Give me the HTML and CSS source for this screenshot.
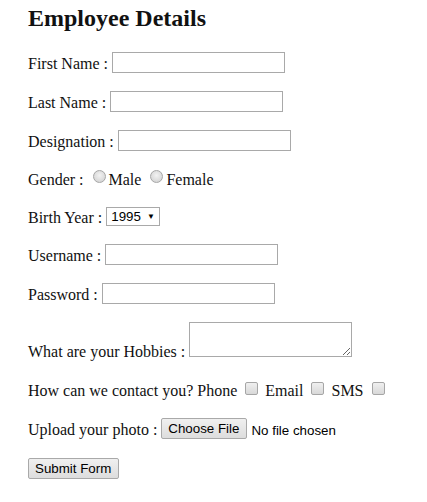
FILE: index.html
```html
<!DOCTYPE html>
<html lang="en">
<head>
<meta charset="utf-8">
<title>Employee Details</title>
<link rel="stylesheet" href="styles.css">
</head>
<body>
<h2 class="title">Employee Details</h2>
<form class="form">
  <p class="row">First Name : <input type="text" class="field"></p>
  <p class="row">Last Name : <input type="text" class="field"></p>
  <p class="row">Designation : <input type="text" class="field"></p>
  <p class="row row-gender">Gender : <input type="radio" name="gender" class="radio">Male <input type="radio" name="gender" class="radio">Female</p>
  <p class="row row-year">Birth Year : <span class="select"><span class="select-value">1995</span><span class="select-arrow">&#9660;</span></span></p>
  <p class="row">Username : <input type="text" class="field"></p>
  <p class="row">Password : <input type="password" class="field"></p>
  <p class="row">What are your Hobbies : <textarea class="area"></textarea></p>
  <p class="row">How can we contact you? Phone <input type="checkbox" class="check"> Email <input type="checkbox" class="check"> SMS <input type="checkbox" class="check"></p>
  <p class="row">Upload your photo : <button type="button" class="btn">Choose File</button> <span class="nofile">No file chosen</span></p>
  <p class="row"><button type="button" class="btn">Submit Form</button></p>
</form>
</body>
</html>
```
FILE: styles.css
```css
html, body {
  background: #ffffff;
}
body {
  margin: 0;
  padding: 5px 28px 0;
  font-family: "Liberation Serif", "Times New Roman", serif;
  font-size: 16px;
  color: #111111;
}
.title {
  font-size: 24px;
  font-weight: bold;
  margin: 0 0 20px;
}
.form {
  margin: 0;
}
.row {
  margin: 16px 0;
  line-height: 23px;
}
.row-gender {
  line-height: 22px;
}
.row-year {
  line-height: 21px;
}
.field {
  box-sizing: border-box;
  width: 173px;
  height: 21px;
  margin: 0;
  padding: 1px 2px;
  border: 1px solid #a9a9a9;
  background: #fff;
  font-family: "Liberation Sans", Arial, sans-serif;
  font-size: 13.33px;
  vertical-align: top;
}
.radio {
  -webkit-appearance: none;
  appearance: none;
  box-sizing: border-box;
  width: 13px;
  height: 13px;
  margin: 0 3px 0 5px;
  border: 1px solid #a6a6a6;
  border-radius: 50%;
  background: radial-gradient(circle at 50% 40%, #f2f2f2 0%, #dcdcdc 60%, #cfcfcf 100%);
  vertical-align: 2px;
}
.check {
  -webkit-appearance: none;
  appearance: none;
  box-sizing: border-box;
  width: 13px;
  height: 13px;
  margin: 0 3px 0 4px;
  border: 1px solid #a6a6a6;
  border-radius: 2px;
  background: linear-gradient(#f0f0f0, #d8d8d8);
  vertical-align: 1px;
}
.select {
  display: inline-flex;
  align-items: center;
  box-sizing: border-box;
  width: 54px;
  height: 19px;
  padding: 0 4px;
  border: 1px solid #a9a9a9;
  background: #fff;
  font-family: "Liberation Sans", Arial, sans-serif;
  font-size: 13.33px;
  line-height: 17px;
  color: #000;
  vertical-align: top;
  gap: 6px;
}
.select-arrow {
  font-size: 8px;
}
.area {
  box-sizing: border-box;
  width: 163px;
  height: 35px;
  margin: 0;
  padding: 2px;
  border: 1px solid #a9a9a9;
  resize: both;
  font-family: "Liberation Mono", monospace;
  font-size: 13.33px;
  vertical-align: baseline;
}
.btn {
  box-sizing: border-box;
  height: 21px;
  margin: 0;
  padding: 1px 7px 1px 6px;
  border: 1px solid #a9a9a9;
  border-radius: 2px;
  background: linear-gradient(#f0f0f0, #dddddd);
  font-family: "Liberation Sans", Arial, sans-serif;
  font-size: 13.33px;
  line-height: 17px;
  color: #000;
  vertical-align: top;
}
.nofile {
  font-family: "Liberation Sans", Arial, sans-serif;
  font-size: 13.33px;
  color: #000;
}
```
